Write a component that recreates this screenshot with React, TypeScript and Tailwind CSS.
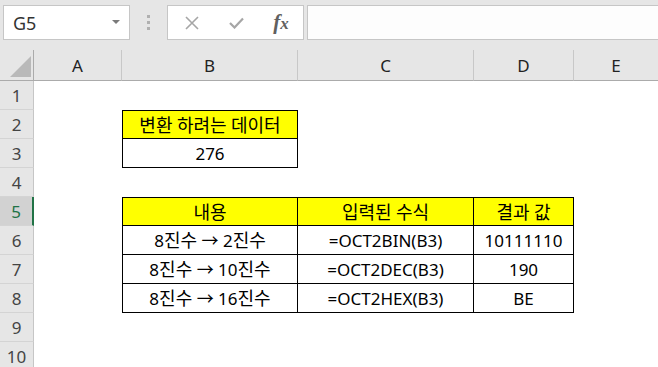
import type { ReactNode } from "react";

const COLS = ["A", "B", "C", "D", "E"];

type TCell = { text: string; yellow?: boolean };

// table blocks keyed by row number -> cells starting at column B
const TABLE: Record<number, TCell[]> = {
  2: [{ text: "변환 하려는 데이터", yellow: true }],
  3: [{ text: "276" }],
  5: [
    { text: "내용", yellow: true },
    { text: "입력된 수식", yellow: true },
    { text: "결과 값", yellow: true },
  ],
  6: [{ text: "8진수 → 2진수" }, { text: "=OCT2BIN(B3)" }, { text: "10111110" }],
  7: [{ text: "8진수 → 10진수" }, { text: "=OCT2DEC(B3)" }, { text: "190" }],
  8: [{ text: "8진수 → 16진수" }, { text: "=OCT2HEX(B3)" }, { text: "BE" }],
};

const FIRST_ROW = new Set([2, 5]);

// hangul runs render a bit larger, like Malgun Gothic in the sheet
function Mixed({ text }: { text: string }) {
  const parts = text.split(/([가-힣]+)/);
  return (
    <span className="whitespace-pre">
      {parts.map((p, i) =>
        /[가-힣]/.test(p) ? (
          <span key={i} className="text-[18px]">
            {p}
          </span>
        ) : (
          <span key={i}>{p}</span>
        )
      )}
    </span>
  );
}

function TableCell({ cell, top, left }: { cell: TCell; top: boolean; left: boolean }) {
  return (
    <div
      className={
        "flex items-center justify-center border-r border-b border-black text-black " +
        (cell.yellow ? "bg-[#ffff00] " : "bg-white ") +
        (top ? "border-t " : "") +
        (left ? "border-l " : "")
      }
    >
      <Mixed text={cell.text} />
    </div>
  );
}

function RowHeader({ n, selected }: { n: number; selected?: boolean }) {
  return (
    <div
      className={
        "flex items-center justify-center border-b border-[#d4d4d4] " +
        (selected
          ? "bg-[#d2d2d2] text-[#217346] border-r-2 border-r-[#217346]"
          : "bg-[#e6e6e6] text-[#444] border-r border-r-[#c6c6c6]")
      }
    >
      {n}
    </div>
  );
}

function Toolbar() {
  return (
    <div className="flex h-[50px] items-start bg-[#e6e6e6] pl-[3px] pt-[5px]">
      <div className="flex h-[35px] w-[127px] items-center justify-between border border-[#c6c6c6] bg-white pl-[9px] pr-[9px] text-[18px] text-[#333]">
        <span>G5</span>
        <svg width="8" height="5" viewBox="0 0 8 5">
          <path d="M0 0 L8 0 L4 4 Z" fill="#7a7a7a" />
        </svg>
      </div>
      <div className="flex h-[35px] w-[37px] flex-col items-center justify-center gap-[3px]">
        <span className="h-[3px] w-[3px] bg-[#b0b0b0]" />
        <span className="h-[3px] w-[3px] bg-[#b0b0b0]" />
        <span className="h-[3px] w-[3px] bg-[#b0b0b0]" />
      </div>
      <div className="flex h-[35px] w-[137px] items-center border border-[#c6c6c6] bg-white">
        <div className="flex w-[44px] justify-center pl-[4px]">
          <svg width="14" height="14" viewBox="0 0 14 14">
            <path d="M1 1 L13 13 M13 1 L1 13" stroke="#a6a6a6" strokeWidth="1.6" />
          </svg>
        </div>
        <div className="flex w-[44px] justify-center pl-[4px]">
          <svg width="15" height="12" viewBox="0 0 15 12">
            <path d="M1 6 L5.5 10.5 L14 1.5" stroke="#a6a6a6" strokeWidth="2.2" fill="none" />
          </svg>
        </div>
        <div className="flex w-[44px] justify-center pl-[6px] font-['Liberation_Serif',serif] text-[21px] font-bold italic text-[#606060]">
          <span>
            f<span className="text-[17px]">x</span>
          </span>
        </div>
      </div>
      <div className="ml-[3px] h-[35px] flex-1 border border-r-0 border-[#c6c6c6] bg-[#fdfdfd]" />
    </div>
  );
}

export default function App() {
  const rows = [1, 2, 3, 4, 5, 6, 7, 8, 9, 10];
  const cells: ReactNode[] = [];

  // header row
  cells.push(
    <div key="corner" className="relative border-b border-r border-[#ababab] bg-[#e6e6e6]">
      <svg className="absolute left-[10px] top-[6px]" width="21" height="21" viewBox="0 0 21 21">
        <path d="M21 0 L21 21 L0 21 Z" fill="#b9b9b9" />
      </svg>
    </div>
  );
  COLS.forEach((c, i) => {
    cells.push(
      <div
        key={"h" + c}
        className={
          "flex items-center justify-center border-b border-[#ababab] bg-[#e6e6e6] text-[#222] " +
          (i < COLS.length - 1 ? "border-r border-r-[#c8c8c8]" : "")
        }
      >
        {c}
      </div>
    );
  });

  rows.forEach((r) => {
    cells.push(<RowHeader key={"r" + r} n={r} selected={r === 5} />);
    cells.push(<div key={r + "A"} className="bg-white" />);
    const t = TABLE[r];
    for (let ci = 0; ci < 4; ci++) {
      const cell = t?.[ci];
      if (cell) {
        cells.push(<TableCell key={r + "-" + ci} cell={cell} top={FIRST_ROW.has(r)} left={ci === 0} />);
      } else {
        cells.push(<div key={r + "-" + ci} className="bg-white" />);
      }
    }
  });

  return (
    <div className="h-[367px] w-[658px] overflow-hidden bg-white font-['Noto_Sans','Noto_Sans_CJK_KR',sans-serif] text-[17px] leading-none">
      <Toolbar />
      <div className="grid grid-cols-[34px_88px_176px_176px_100px_1fr] grid-rows-[31px_repeat(10,29px)]">
        {cells}
      </div>
    </div>
  );
}
